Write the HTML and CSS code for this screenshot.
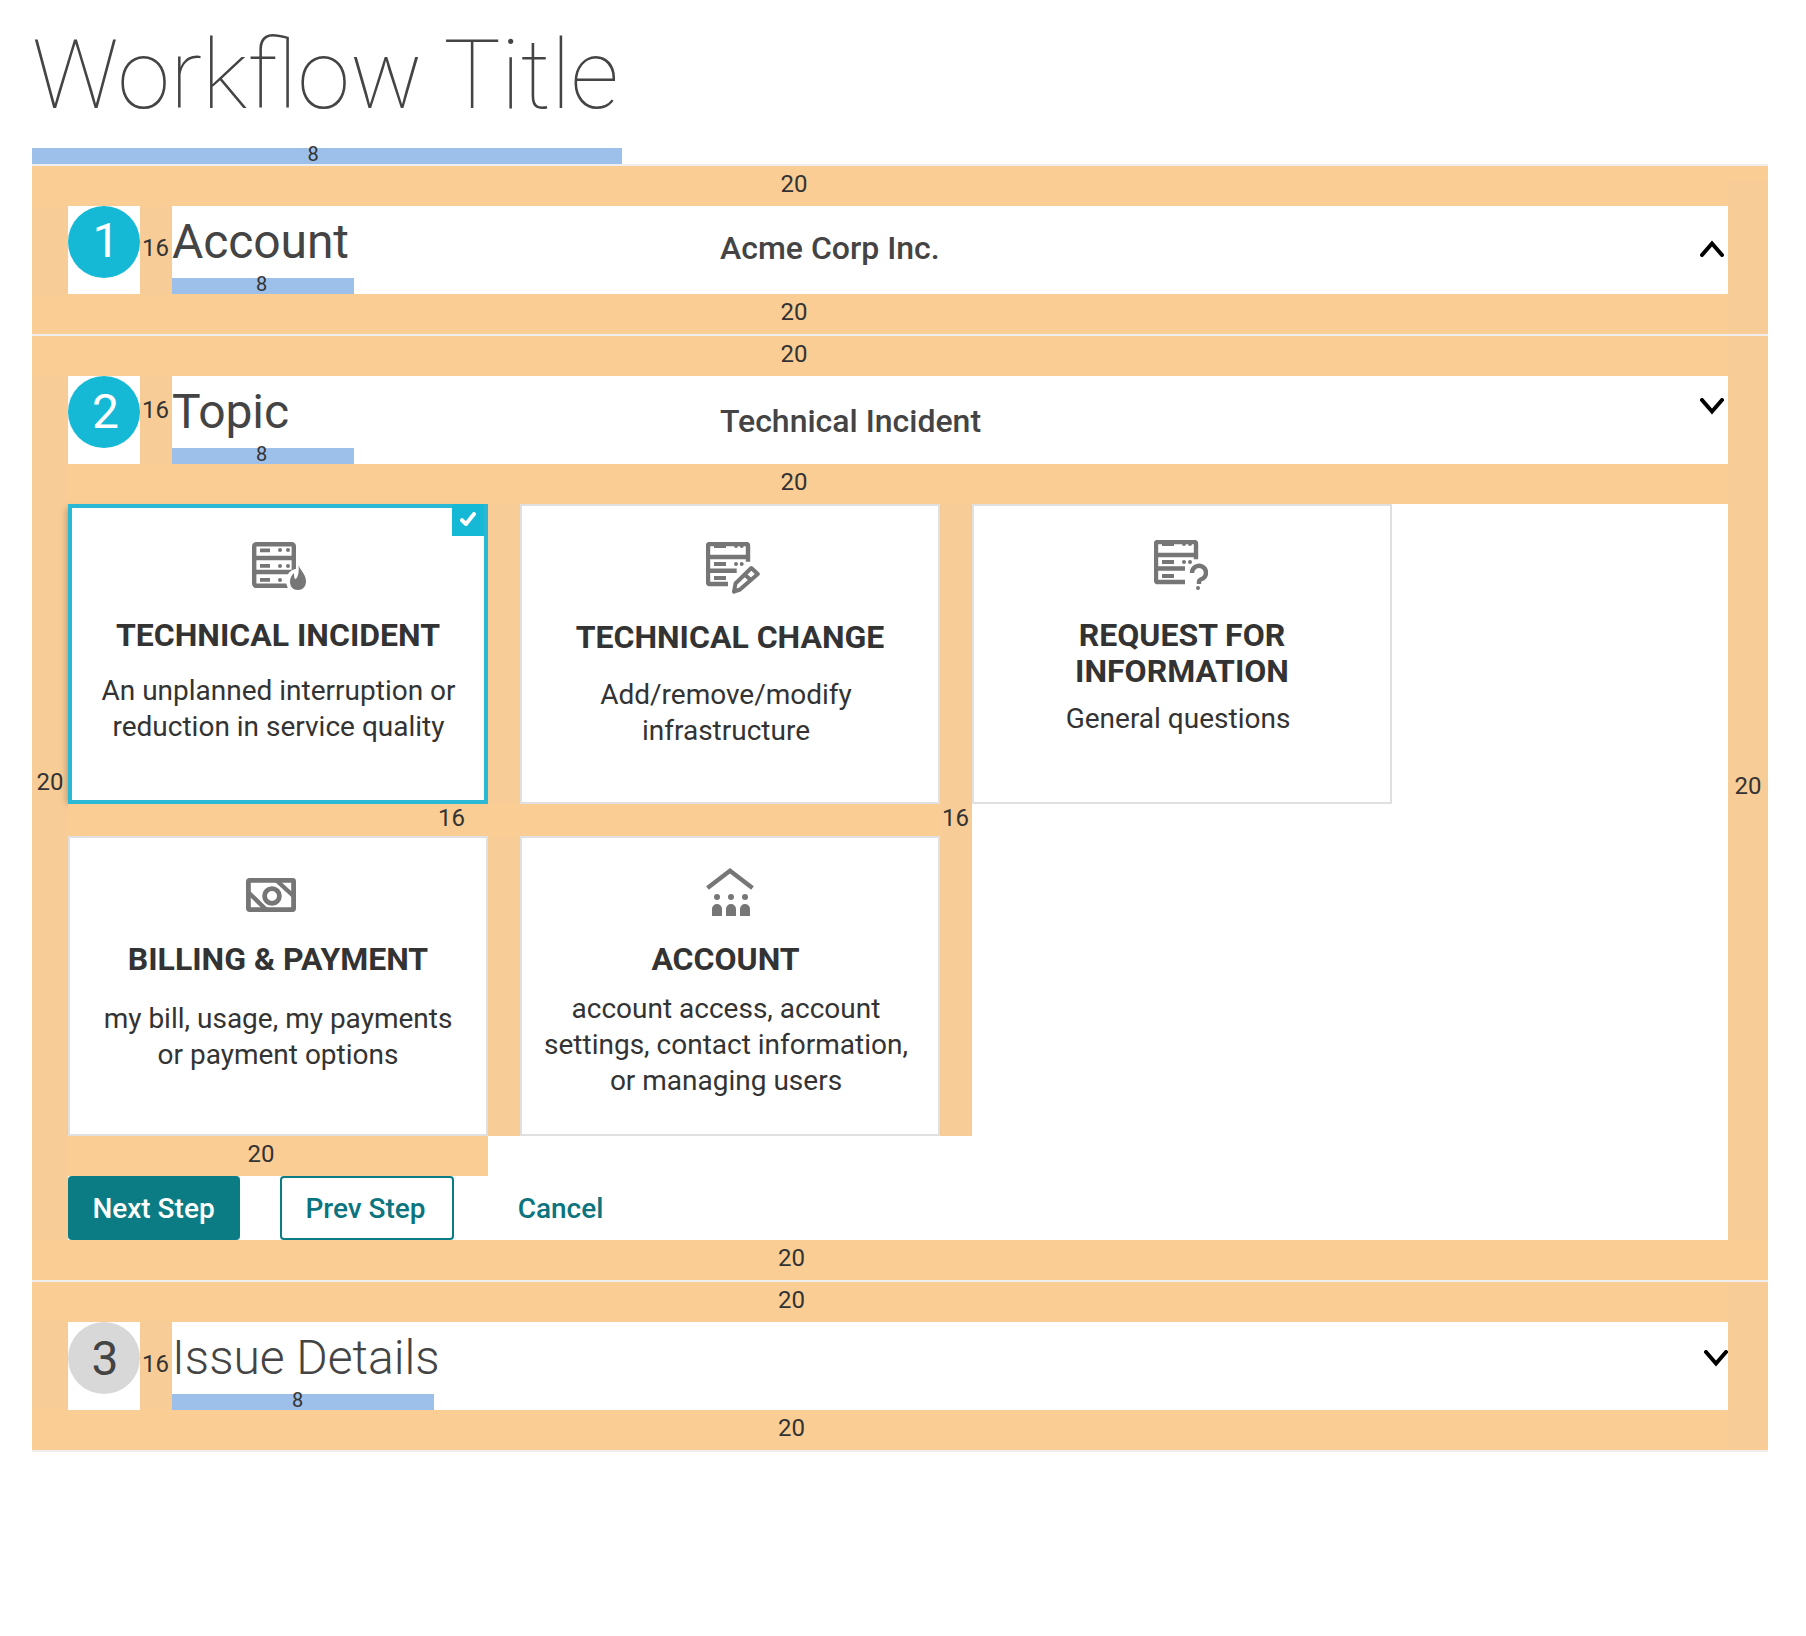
FILE: index.html
```html
<!DOCTYPE html>
<html lang="en">
<head>
<meta charset="utf-8">
<title>Workflow Title</title>
<link rel="stylesheet" href="styles.css">
</head>
<body>
<main class="workflow">
  <h1 class="title">Workflow Title</h1>
  <div class="gap8 gap8-title">8</div>

  <section class="step step-first">
    <div class="bar"><span>20</span></div>
    <div class="step-body">
      <div class="side side-left"></div>
      <header class="step-head">
        <div class="badge badge-one">1</div>
        <div class="gap16">16</div>
        <div class="heading"><h2>Account</h2><div class="gap8">8</div></div>
        <p class="value">Acme Corp Inc.</p>
        <svg class="chevron chevron-up" viewBox="0 0 24 17"><path d="M2 15 12 3.5 22 15"/></svg>
      </header>
    </div>
    <div class="bar"><span>20</span></div>
    <div class="side-right"></div>
  </section>

  <section class="step">
    <div class="bar"><span>20</span></div>
    <div class="step-body">
      <div class="side side-left side-tall">20</div>
      <div class="content">
        <header class="step-head">
          <div class="badge">2</div>
          <div class="gap16 gap16-high">16</div>
          <div class="heading"><h2>Topic</h2><div class="gap8">8</div></div>
          <p class="value value-low">Technical Incident</p>
          <svg class="chevron chevron-high" viewBox="0 0 24 17"><path d="M2 2 12 13.5 22 2"/></svg>
        </header>
        <div class="bar bar-inner"><span>20</span></div>
        <div class="cards">
          <article class="card card-incident selected">
            <span class="check"><svg viewBox="0 0 16 14"><path d="M2 8.2 6 12 14 2"/></svg></span>
            <svg class="icon" width="54" height="48" viewBox="0 0 54 48">
              <rect class="line" x="2.2" y="2.2" width="39.6" height="41.6" rx="2"/>
              <path class="line" d="M2 16H42M2 30H42"/>
              <path class="fill" d="M8 6.500h10v3.700H8zM8 22h10v3.800H8zM8 36h10v3.800H8z"/>
              <g class="fill"><circle cx="28" cy="8" r="2"/><circle cx="36" cy="8" r="2"/><circle cx="28" cy="24" r="2"/><circle cx="36" cy="24" r="2"/><circle cx="28" cy="38" r="2"/></g>
              <path class="halo" d="M44.500 27C37 27 30 37 37 48H54V30Z"/>
              <path class="fill" d="M46.500 22.500C47 27 54 32 54 39C54 45 50.500 48 46 48C41 48 38 44.500 38 39.500C38 36 39.600 33 42 31C42 34 42 36 43.500 37.300C46.500 35 47.200 29 46.500 22.500Z"/>
            </svg>
            <h3>Technical Incident</h3>
            <p>An unplanned interruption or<br>reduction in service quality</p>
          </article>
          <div class="gutter"></div>
          <article class="card card-change">
            <svg class="icon" width="54" height="52" viewBox="0 0 54 52">
              <path class="line" d="M22 42H4Q2 42 2 40V4Q2 2 4 2H40Q42 2 42 4V19.7M2 15H42M2 28.7H30.7"/>
              <path class="fill" d="M8 2h12v4H8zM8 20h12v4H8zM8 34h12v4H8z"/>
              <g class="fill"><circle cx="30" cy="4" r="2"/><circle cx="35.7" cy="4" r="2"/><circle cx="30" cy="22" r="2"/><circle cx="35.7" cy="22" r="2"/></g>
              <path class="line thin" d="M45.3 26 51.8 32 34 47.5 28 49.7 29.5 41.5ZM38.5 32.5 45.5 38.5"/>
            </svg>
            <h3>Technical Change</h3>
            <p>Add/remove/modify<br>infrastructure</p>
          </article>
          <div class="gutter gutter-tall"></div>
          <article class="card card-request">
            <svg class="icon" width="54" height="50" viewBox="0 0 54 50">
              <path class="line" d="M31 42H4Q2 42 2 40V4Q2 2 4 2H40Q42 2 42 4V19.3M2 15H42M2 28.5H31"/>
              <path class="fill" d="M8 2h12v4H8zM8 20h12v4H8zM8 34h12v4H8z"/>
              <g class="fill"><circle cx="30" cy="4" r="2"/><circle cx="36" cy="4" r="2"/><circle cx="30" cy="22" r="2"/><circle cx="36" cy="22" r="2"/><circle cx="44" cy="48" r="2"/></g>
              <path class="line" d="M38 33A7 7 0 1 1 49 38.5Q45 40 45 41.5V44"/>
            </svg>
            <h3>Request for<br>Information</h3>
            <p>General questions</p>
          </article>
          <div class="row-gap"><span>16</span><span>16</span></div>
          <article class="card card-billing">
            <svg class="icon" width="50" height="34" viewBox="0 0 50 34">
              <rect class="line bold" x="2.4" y="2.4" width="45.2" height="29.2" rx="1"/>
              <circle class="line bold" cx="26" cy="18" r="7.4"/>
              <path class="line" d="M30 2 47.500 18M3 15 20 31.500"/>
            </svg>
            <h3>Billing &amp; Payment</h3>
            <p>my bill, usage, my payments<br>or payment options</p>
          </article>
          <div class="gutter gutter-low"></div>
          <article class="card card-account">
            <svg class="icon" width="48" height="48" viewBox="0 0 48 48">
              <path class="line" d="M1.500 20 24 2.800 46.500 20"/>
              <g class="fill"><circle cx="11" cy="29" r="3"/><circle cx="25" cy="29" r="3"/><circle cx="39" cy="29" r="3"/>
              <path d="M6 48V41a5 5 0 0 1 10 0V48zM20 48V41a5 5 0 0 1 10 0V48zM34 48V41a5 5 0 0 1 10 0V48z"/></g>
            </svg>
            <h3>Account</h3>
            <p>account access, account<br>settings, contact information,<br>or managing users</p>
          </article>
        </div>
        <div class="actions-gap">20</div>
        <div class="actions">
          <button class="btn btn-primary">Next Step</button>
          <button class="btn btn-outline">Prev Step</button>
          <button class="btn btn-text">Cancel</button>
        </div>
      </div>
      <div class="side side-end">20</div>
    </div>
    <div class="bar bar-shift"><span>20</span></div>
    <div class="side-right side-right-head"></div>
  </section>

  <section class="step step-last">
    <div class="bar bar-shift"><span>20</span></div>
    <div class="step-body">
      <div class="side side-left"></div>
      <header class="step-head">
        <div class="badge badge-idle">3</div>
        <div class="gap16">16</div>
        <div class="heading heading-light"><h2>Issue Details</h2><div class="gap8">8</div></div>
        <svg class="chevron chevron-last" viewBox="0 0 24 17"><path d="M2 2 12 13.5 22 2"/></svg>
      </header>
    </div>
    <div class="bar bar-shift"><span>20</span></div>
    <div class="side-right side-right-last"></div>
  </section>
</main>
</body>
</html>
```
FILE: styles.css
```css
* { box-sizing: border-box; }
:root {
  --bar: #facd95;
  --side: #f7cc97;
  --blue: #9cc0ea;
  --cyan: #16b9d5;
  --teal: #0c7c84;
}
body {
  margin: 0;
  background: #fff;
  color: #333;
  font-family: Roboto, sans-serif;
  font-size: 24px;
}
h1, h2, h3, p { margin: 0; }
.workflow { width: 1736px; margin-left: 32px; }
.title {
  height: 148px;
  padding: 27px 0 0;
  font-size: 95.8px;
  font-weight: 100;
  line-height: 97px;
  color: #444;
}
.gap8 {
  height: 16px;
  background: var(--blue);
  font-size: 20px;
  line-height: 12px;
  text-align: center;
}
.gap8-title { width: 590px; padding-right: 28px; }

/* steps */
.step { position: relative; border-top: 2px solid #eee; }
.step-last { border-bottom: 2px solid #eee; }
.bar {
  height: 40px;
  padding-left: 748.5px;
  background: var(--bar);
  line-height: 36px;
}
.bar-shift { padding-left: 746px; }
.bar-inner { padding-left: 712.5px; }
.step-body { display: flex; }
.side { flex: none; width: 40px; background: var(--side); text-align: center; }
.side-left { width: 36px; }
.side-tall { padding-top: 392px; }
.side-end { padding-top: 396px; }
.side-right {
  position: absolute;
  top: 14px;
  right: 0;
  bottom: 0;
  width: 40px;
  background: var(--side);
}
.side-right-head { top: 0; bottom: auto; height: 40px; }
.side-right-last { top: 0; bottom: 4px; }
.content { width: 1660px; }
.step-head { display: flex; width: 1660px; height: 88px; }
.badge {
  flex: none;
  width: 72px;
  height: 72px;
  padding-left: 3px;
  border-radius: 50%;
  background: var(--cyan);
  color: #fff;
  font-size: 48px;
  line-height: 71px;
  text-align: center;
}
.badge-one { padding-left: 4px; line-height: 70px; }
.badge-idle { padding-left: 2px; background: #d8d8d8; color: #444; line-height: 73px; }
.gap16 {
  flex: none;
  width: 32px;
  padding: 28px 1px 0 0;
  background: var(--side);
  line-height: 28px;
  text-align: center;
}
.gap16-high { padding-top: 20px; }
.heading { flex: none; width: 548px; }
.heading h2 {
  height: 72px;
  color: #444;
  font-size: 48px;
  font-weight: 400;
  line-height: 72px;
  letter-spacing: -.1px;
  white-space: nowrap;
}
.heading .gap8 { width: 182px; padding-right: 3px; }
.heading-light h2 { font-weight: 300; letter-spacing: 0; }
.heading-light .gap8 { width: 262px; padding-right: 11px; }
.value { padding-top: 24px; color: #444; font-size: 32px; font-weight: 500; line-height: 36px; }
.value-low { padding-top: 27px; }
.chevron {
  width: 24px;
  height: 17px;
  margin: 34px 4px 0 auto;
  fill: none;
  stroke: #000;
  stroke-width: 4;
  stroke-linecap: round;
}
.chevron-high { margin-top: 22px; }
.chevron-last { margin: 28px 0 0 auto; }

/* topic cards */
.cards {
  display: grid;
  grid-template-columns: 420px 32px 420px 32px 420px;
  grid-template-rows: 300px 32px 300px;
}
.gutter { grid-column: 2; grid-row: 1; background: var(--side); }
.gutter-low { grid-row: 3; }
.gutter-tall { grid-column: 4; grid-row: 1 / 4; }
.row-gap {
  display: flex;
  z-index: 1;
  grid-column: 1 / 5;
  grid-row: 2;
  gap: 477px;
  padding-left: 370px;
  background: linear-gradient(90deg, var(--bar) 872px, var(--side) 872px);
  line-height: 28px;
}
.card {
  position: relative;
  display: flex;
  flex-direction: column;
  align-items: center;
  border: 2px solid #e0e0e0;
  background: #fff;
  text-align: center;
}
.card h3 { font-size: 32px; font-weight: 700; line-height: 36px; text-transform: uppercase; white-space: nowrap; }
.card p { font-size: 28px; line-height: 36px; white-space: nowrap; }
.selected { border: 4px solid #2ab8d4; box-shadow: -4px 2px 6px -2px rgba(0, 0, 0, .22); }
.check {
  position: absolute;
  top: -4px;
  right: 0;
  width: 32px;
  height: 32px;
  padding: 8px;
  background: var(--cyan);
}
.check svg { display: block; width: 16px; height: 14px; fill: none; stroke: #fff; stroke-width: 4; stroke-linecap: round; stroke-linejoin: round; }
.icon { flex: none; display: block; }
.line { fill: none; stroke: #767676; stroke-width: 4.4; }
.thin { stroke-width: 4; stroke-linejoin: round; }
.bold { stroke-width: 4.8; }
.fill { fill: #767676; }
.halo { fill: #fff; }

.card-incident { padding-top: 34px; }
.card-incident .icon { margin: 0 0 27px 2px; }
.card-incident p { margin: 20px 0 0 1px; }
.card-change { padding-top: 36px; }
.card-change .icon { margin: 0 0 25px 6px; }
.card-change p { margin: 22px 8px 0 0; }
.card-request { padding-top: 34px; }
.card-request .icon { margin: 0 2px 27px 0; }
.card-request p { margin: 12px 8px 0 0; }
.card-billing { grid-column: 1; grid-row: 3; padding-top: 40px; }
.card-billing .icon { margin: 0 14px 29px 0; }
.card-billing p { margin-top: 24px; }
.card-account { grid-column: 3; grid-row: 3; padding-top: 30px; }
.card-account .icon { margin: 0 0 25px; }
.card-account h3 { margin-right: 9px; }
.card-account p { margin: 14px 8px 0 0; }

/* actions */
.actions-gap { width: 420px; height: 40px; padding-right: 34px; background: var(--bar); line-height: 36px; text-align: center; }
.actions { display: flex; }
.btn {
  height: 64px;
  padding: 1px 0 0;
  border: 2px solid transparent;
  border-radius: 4px;
  background: none;
  color: #0c747e;
  font: 500 28px/60px Roboto, sans-serif;
}
.btn-primary { width: 172px; margin-right: 40px; padding-right: 1px; background: var(--teal); color: #fff; }
.btn-outline { width: 174px; border-color: var(--teal); padding-right: 3px; }
.btn-text { width: 134px; margin-left: 40px; padding-right: 1px; }
```
